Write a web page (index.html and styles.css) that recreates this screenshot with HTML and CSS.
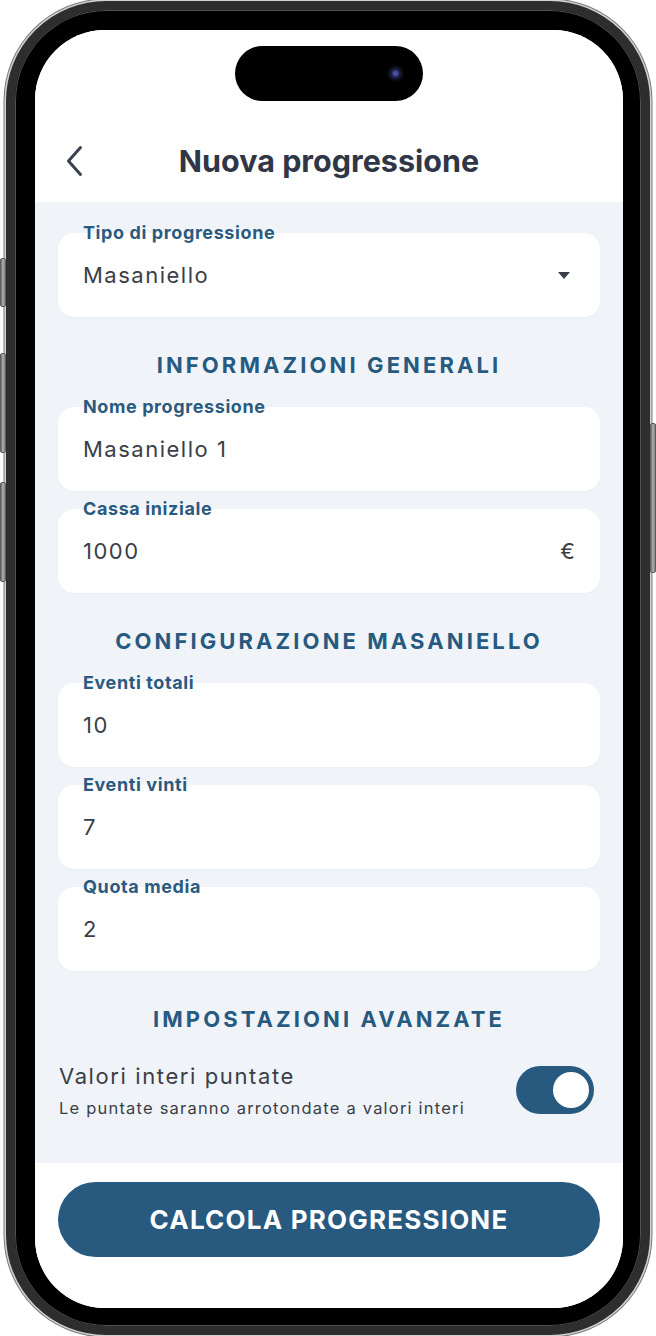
FILE: index.html
```html
<!DOCTYPE html>
<html lang="it">
<head>
<meta charset="utf-8">
<title>Nuova progressione</title>
<link rel="stylesheet" href="styles.css">
</head>
<body>
<div class="device">
  <span class="hw-btn hw-action"></span>
  <span class="hw-btn hw-vol-up"></span>
  <span class="hw-btn hw-vol-down"></span>
  <span class="hw-btn hw-power"></span>
  <div class="phone">
    <div class="screen">
      <header class="app-header">
        <div class="island"><span class="camera"></span></div>
        <div class="title-row">
          <button class="back" aria-label="Indietro">
            <svg width="20" height="32" viewBox="0 0 20 32" fill="none" stroke="currentColor" stroke-width="3" stroke-linecap="round" stroke-linejoin="round"><path d="M15.5 2.5 L3.5 16 L15.5 29.5"/></svg>
          </button>
          <h1 class="title">Nuova progressione</h1>
          <span class="spacer"></span>
        </div>
      </header>

      <main class="content">
        <div class="field">
          <span class="field-label">Tipo di progressione</span>
          <div class="field-box"><span class="field-value">Masaniello</span><span class="caret"></span></div>
        </div>

        <h2 class="section-title">Informazioni generali</h2>
        <div class="field">
          <span class="field-label">Nome progressione</span>
          <div class="field-box"><span class="field-value">Masaniello 1</span></div>
        </div>
        <div class="field">
          <span class="field-label">Cassa iniziale</span>
          <div class="field-box"><span class="field-value">1000</span><span class="suffix">€</span></div>
        </div>

        <h2 class="section-title">Configurazione Masaniello</h2>
        <div class="field">
          <span class="field-label">Eventi totali</span>
          <div class="field-box"><span class="field-value">10</span></div>
        </div>
        <div class="field">
          <span class="field-label">Eventi vinti</span>
          <div class="field-box"><span class="field-value">7</span></div>
        </div>
        <div class="field">
          <span class="field-label">Quota media</span>
          <div class="field-box"><span class="field-value">2</span></div>
        </div>

        <h2 class="section-title">Impostazioni avanzate</h2>
        <div class="setting">
          <div class="setting-text">
            <div class="setting-title">Valori interi puntate</div>
            <div class="setting-desc">Le puntate saranno arrotondate a valori interi</div>
          </div>
          <span class="switch"><span class="knob"></span></span>
        </div>
      </main>

      <footer class="footer">
        <button class="cta">CALCOLA PROGRESSIONE</button>
      </footer>
    </div>
  </div>
</div>
</body>
</html>
```

FILE: styles.css
```css
* { box-sizing: border-box; }

body {
  margin: 0;
  background: #ffffff;
  font-family: Inter, "Noto Sans", "Liberation Sans", sans-serif;
}

.device {
  position: relative;
  width: 656px;
  height: 1336px;
  padding: 1px 6px 0;
}

.hw-btn {
  position: absolute;
  width: 6px;
  border: 1px solid #5e5e5e;
  border-radius: 2px;
  background: linear-gradient(90deg, #6d6d6d, #b3b3b3 50%, #7a7a7a);
}
.hw-action { left: 0; top: 258px; height: 49px; }
.hw-vol-up { left: 0; top: 353px; height: 100px; }
.hw-vol-down { left: 0; top: 482px; height: 100px; }
.hw-power { left: 650px; top: 423px; height: 150px; }

.phone {
  width: 644px;
  height: 1334px;
  border: 9px solid #2e2e2e;
  border-radius: 100px;
  background: #000;
  padding: 20px 18px 18px 20px;
  box-shadow: 0 0 0 1.5px #d2d2d2, 0 0 0 2.5px #7a7a7a, inset 0 0 0 1px #505050;
}

.screen {
  width: 588px;
  height: 1278px;
  border-radius: 70px;
  overflow: hidden;
  background: #ffffff;
  display: flex;
  flex-direction: column;
}

/* Header */
.app-header {
  flex: none;
  height: 172px;
  padding-top: 16px;
  background: #ffffff;
}

.island {
  position: relative;
  width: 188px;
  height: 55px;
  margin: 0 auto;
  border-radius: 28px;
  background: #000;
}

.camera {
  position: absolute;
  right: 19px;
  top: 19px;
  width: 17px;
  height: 17px;
  border-radius: 50%;
  background: radial-gradient(circle, #4b4fa0 0 2px, #23265a 3.5px, #10121f 6px, #050507 8.5px);
}

.title-row {
  margin-top: 30px;
  height: 60px;
  display: grid;
  grid-template-columns: 1fr auto 1fr;
  align-items: center;
}

.back {
  justify-self: start;
  margin-left: 30px;
  padding: 0;
  border: none;
  background: none;
  color: #3a4252;
  display: flex;
}

.title {
  margin: 0;
  font-size: 30.5px;
  font-weight: 700;
  letter-spacing: 0;
  color: #2f3747;
  line-height: 38px;
}

/* Content */
.content {
  flex: 1;
  background: #f0f4f8;
  padding: 31px 23px 0;
}

.field { position: relative; }
.field + .field { margin-top: 18px; }

.field-box {
  height: 84px;
  background: #ffffff;
  border-radius: 16px;
  display: flex;
  align-items: center;
  justify-content: space-between;
  padding: 0 25px;
  box-shadow: 0 1px 2px rgba(30, 50, 80, 0.03);
}

.field-label {
  position: absolute;
  left: 25px;
  top: -11px;
  z-index: 1;
  font-size: 18px;
  line-height: 22px;
  font-weight: 700;
  letter-spacing: 0.6px;
  color: #2b5a80;
}

.field-value {
  font-size: 22px;
  font-weight: 400;
  letter-spacing: 1.5px;
  color: #3a3e47;
}

.suffix {
  font-size: 22px;
  color: #3a3e47;
}

.caret {
  width: 0;
  height: 0;
  margin-right: 5px;
  border-left: 6px solid transparent;
  border-right: 6px solid transparent;
  border-top: 7px solid #3a3e47;
}

.section-title {
  margin: 34px 0 28px;
  text-align: center;
  text-transform: uppercase;
  font-size: 22px;
  line-height: 28px;
  font-weight: 700;
  letter-spacing: 3.1px;
  color: #275a80;
}

.setting {
  display: flex;
  align-items: center;
  justify-content: space-between;
  padding: 0 6px 0 1px;
}

.setting-title {
  font-size: 22px;
  line-height: 30px;
  letter-spacing: 1.6px;
  color: #3a3e47;
}

.setting-desc {
  margin-top: 7px;
  font-size: 16.5px;
  line-height: 20px;
  letter-spacing: 1.2px;
  color: #3a3e47;
}

.switch {
  width: 78px;
  height: 48px;
  border-radius: 24px;
  background: #285a80;
  display: flex;
  align-items: center;
  justify-content: flex-end;
  padding-right: 5px;
}

.knob {
  width: 36px;
  height: 36px;
  border-radius: 50%;
  background: #ffffff;
}

/* Footer */
.footer {
  flex: none;
  height: 145px;
  padding: 19px 23px 0;
  background: #ffffff;
}

.cta {
  width: 100%;
  height: 75px;
  border: none;
  border-radius: 38px;
  background: #285a80;
  color: #ffffff;
  font-family: Inter, "Noto Sans", sans-serif;
  font-size: 26px;
  font-weight: 700;
  letter-spacing: 1.2px;
}
```
